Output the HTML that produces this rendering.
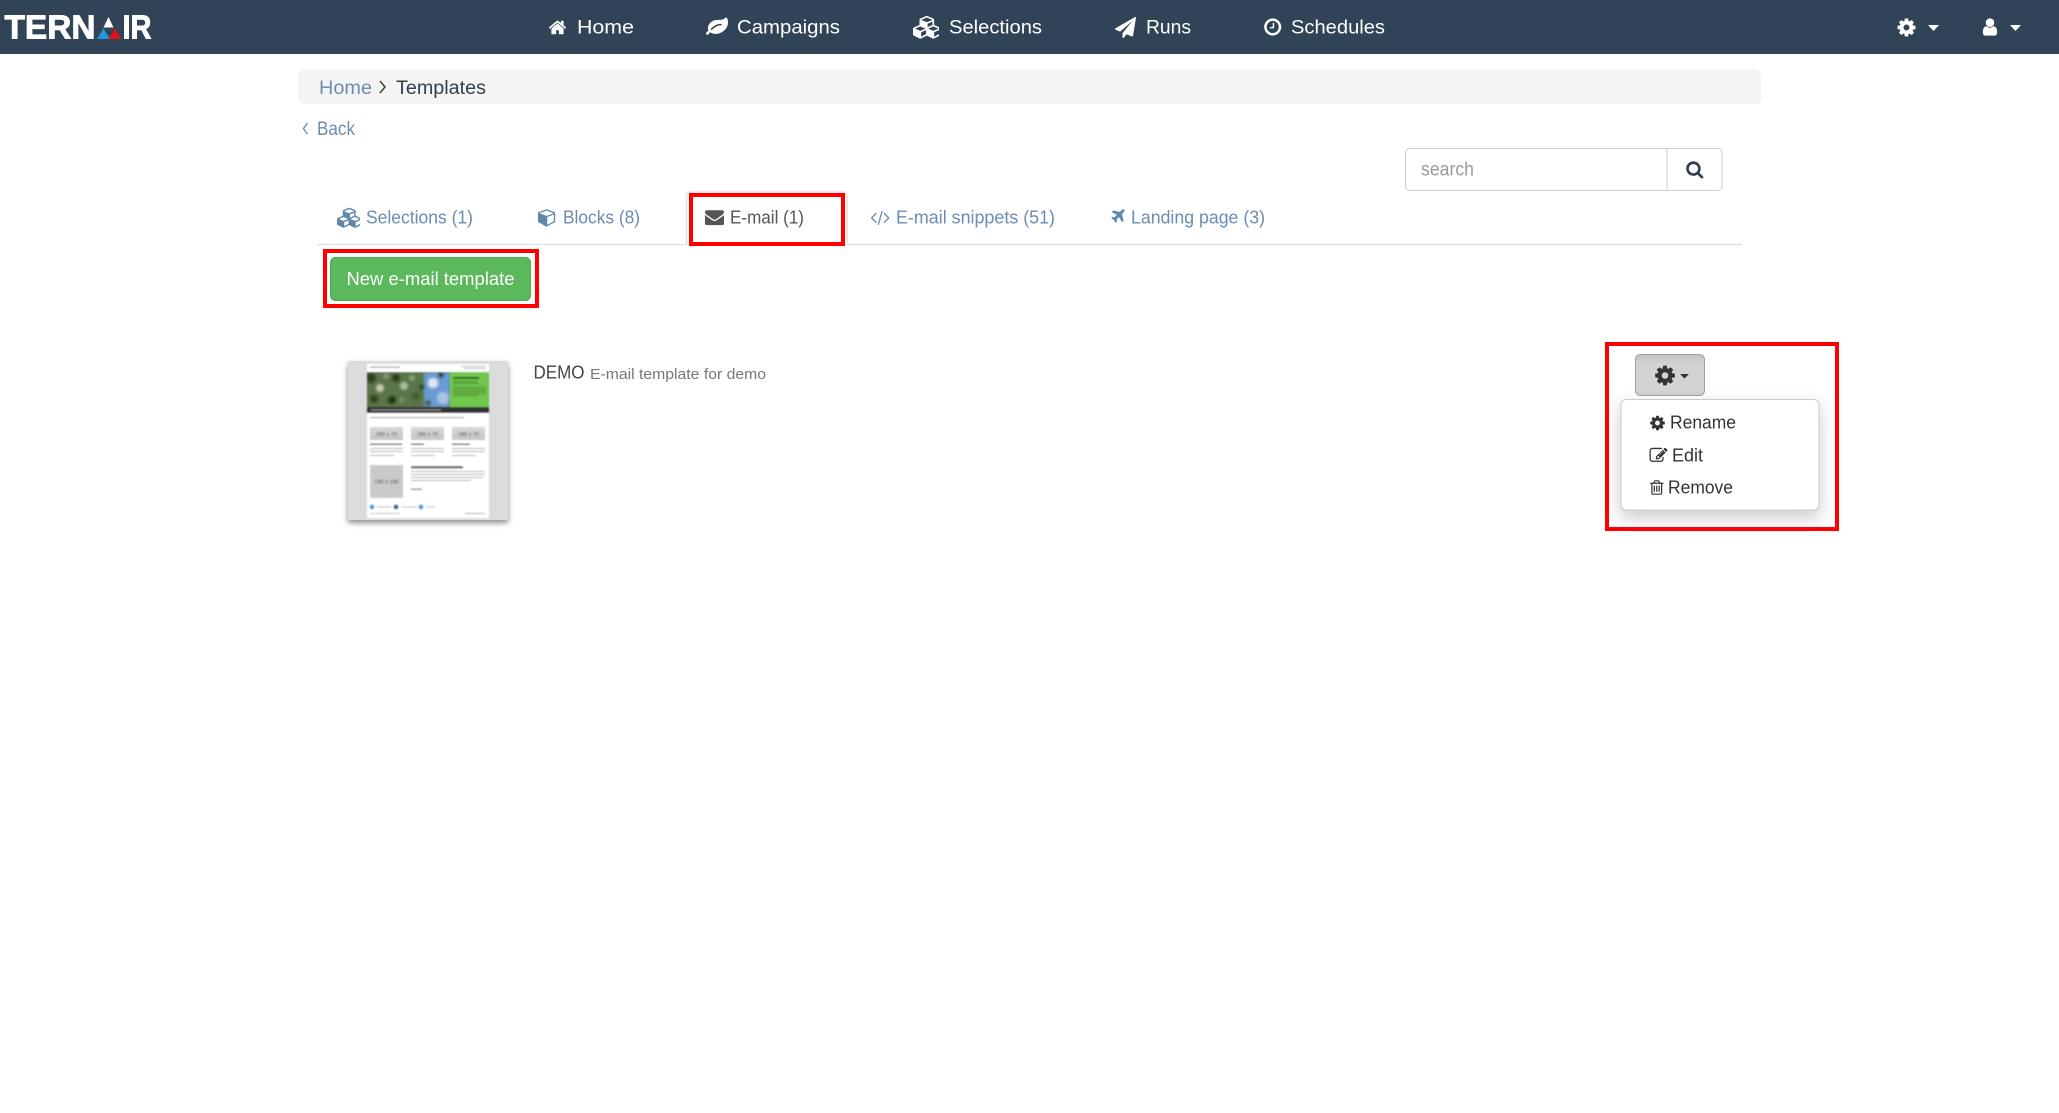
<!DOCTYPE html>
<html lang="en"><head><meta charset="utf-8"><title>Templates</title>
<style>
html,body{margin:0;padding:0;background:#fff;width:2059px;height:1113px;overflow:hidden}
svg{display:block}
text{font-family:"Liberation Sans",Arial,sans-serif}
.nav{font-size:19.5px;fill:#fff}
.bc{font-size:19px}
.tab{font-size:18.5px;fill:#6c8cb0}
.menu{font-size:18.5px;fill:#333}
.logo{font-size:33px;font-weight:700;fill:#fff;stroke:#fff;stroke-width:.9px}
</style></head><body>
<svg width="2059" height="1113" viewBox="0 0 2059 1113" xmlns="http://www.w3.org/2000/svg">
<defs>
<symbol id="cog" viewBox="0 0 1792 1792"><path d="M1152 896q0-106-75-181t-181-75-181 75-75 181 75 181 181 75 181-75 75-181zm512-109v222q0 12-8 23t-20 13l-185 28q-19 54-39 91 35 50 107 138 10 12 10 25t-9 23q-27 37-99 108t-94 71q-12 0-26-9l-138-108q-44 23-91 38-16 136-29 186-7 28-36 28h-222q-14 0-24.500-8.500t-11.500-21.500l-28-184q-49-16-90-37l-141 107q-10 9-25 9-14 0-25-11-126-114-165-168-7-10-7-23 0-12 8-23 15-21 51-66.500t54-70.500q-27-50-41-99l-183-27q-13-2-21-12.500t-8-23.500v-222q0-12 8-23t19-13l186-28q14-46 39-92-40-57-107-138-10-12-10-24 0-10 9-23 26-36 98.500-107.500t94.500-71.500q13 0 26 10l138 107q44-23 91-38 16-136 29-186 7-28 36-28h222q14 0 24.500 8.500t11.500 21.500l28 184q49 16 90 37l142-107q9-9 24-9 13 0 25 10 129 119 165 170 7 8 7 22 0 12-8 23-15 21-51 66.500t-54 70.500q26 50 41 98l183 28q13 2 21 12.500t8 23.500z"/></symbol>
<symbol id="home" viewBox="0 0 1792 1792"><path d="M1472 992v480q0 26-19 45t-45 19h-384v-384h-256v384h-384q-26 0-45-19t-19-45v-480q0-1 .5-3t.5-3l575-474 575 474q1 2 1 6zm223-69l-62 74q-8 9-21 11h-3q-13 0-21-7l-692-577-692 577q-12 8-24 7-13-2-21-11l-62-74q-8-10-7-23.500t11-21.500l719-599q32-26 76-26t76 26l244 204v-195q0-14 9-23t23-9h192q14 0 23 9t9 23v408l219 182q10 8 11 21.500t-7 23.500z"/></symbol>
<symbol id="env" viewBox="0 0 1792 1792"><path d="M1792 710v794q0 66-47 113t-113 47h-1472q-66 0-113-47t-47-113v-794q44 49 101 87 362 246 497 345 57 42 92.500 65.500t94.500 48 110 24.500h2q51 0 110-24.500t94.500-48 92.500-65.500q170-123 498-345 57-39 100-87zm0-294q0 79-49 151t-122 123q-376 261-468 325-10 7-42.500 30.500t-54 38-52 32.500-57.500 27-50 9h-2q-23 0-50-9t-57.500-27-52-32.500-54-38-42.500-30.500q-91-64-262-182.500t-205-142.500q-62-42-117-115.500t-55-136.500q0-78 41.500-130t118.500-52h1472q65 0 112.500 47t47.500 113z"/></symbol>
<symbol id="search" viewBox="0 0 1792 1792"><path d="M1216 832q0-185-131.500-316.500t-316.500-131.500-316.500 131.500-131.500 316.500 131.500 316.500 316.500 131.500 316.500-131.500 131.500-316.500zm512 832q0 52-38 90t-90 38q-54 0-90-38l-343-342q-179 124-399 124-143 0-273.500-55.500t-225-150-150-225-55.500-273.500 55.500-273.500 150-225 225-150 273.500-55.500 273.500 55.500 225 150 150 225 55.500 273.500q0 220-124 399l343 343q37 37 37 90z"/></symbol>
<symbol id="user" viewBox="0 0 1792 1792"><path d="M1536 1399q0 109-62.500 187t-150.500 78h-854q-88 0-150.500-78t-62.500-187q0-85 8.500-160.500t31.500-152 58.500-131 94-89 134.500-34.500q131 128 313 128t313-128q76 0 134.500 34.500t94 89 58.500 131 31.500 152 8.500 160.500zm-256-887q0 159-112.500 271.500t-271.500 112.500-271.500-112.500-112.500-271.500 112.500-271.500 271.500-112.500 271.500 112.500 112.500 271.500z"/></symbol>
<symbol id="send" viewBox="0 0 1792 1792"><path d="M1764 11q33 24 27 64l-256 1536q-5 29-32 45-14 8-31 8-11 0-24-5l-453-185-242 295q-18 23-49 23-13 0-22-4-19-7-30.500-23.500t-11.500-36.500v-349l864-1059-1069 925-395-162q-37-14-40-55-2-40 32-59l1664-960q15-9 32-9 20 0 36 11z"/></symbol>
<symbol id="plane" viewBox="0 0 1408 1792"><path d="M1376 160q44 52 12 148t-108 172l-161 161 160 696q5 19-12 33l-128 96q-7 6-19 6-4 0-7-1-15-3-21-16l-279-508-259 259 53 194q5 17-8 31l-96 96q-9 9-23 9h-2q-15-2-24-13l-189-252-252-189q-11-7-13-23-1-13 9-25l96-97q9-9 23-9 6 0 8 1l194 53 259-259-508-279q-14-8-17-24-2-16 9-27l128-128q14-13 30-8l665 159 160-160q76-76 172-108t148 12z"/></symbol>
<symbol id="clock" viewBox="0 0 1792 1792"><path transform="translate(64 0)" d="M1024 544v448q0 14-9 23t-23 9h-320q-14 0-23-9t-9-23v-64q0-14 9-23t23-9h224v-352q0-14 9-23t23-9h64q14 0 23 9t9 23zm416 352q0-148-73-273t-198-198-273-73-273 73-198 198-73 273 73 273 198 198 273 73 273-73 198-198 73-273zm224 0q0 209-103 385.500t-279.500 279.500-385.500 103-385.500-103-279.500-279.500-103-385.500 103-385.500 279.500-279.500 385.500-103 385.500 103 279.500 279.500 103 385.500z"/></symbol>
<symbol id="leaf" viewBox="0 0 1792 1792"><path d="M1280 704q0-26-19-45t-45-19q-172 0-318 49.500t-259.500 134-235.500 219.500q-19 21-19 45 0 26 19 45t45 19q24 0 45-19 27-24 74-71t67-66q137-124 268.500-176t313.500-52q26 0 45-19t19-45zm512-198q0 95-20 193-46 224-184.500 383t-357.500 268q-214 108-438 108-148 0-286-47-15-5-88-42t-96-37q-16 0-39.500 32t-45 70-52.500 70-60 32q-30 0-51-11t-31-24-27-42q-2-4-6-11t-5.500-10-3-9.500-1.500-13.500q0-35 31-73.500t68-65.500 68-56 31-48q0-4-14-38t-16-44q-9-51-9-104 0-115 43.500-220t119-184.500 170.500-139 204-95.500q55-18 145-25.500t179.500-9 178.500-6 163.500-24 113.500-56.500l29.500-29.500 29.500-28 27-20 36.500-16 43.500-4.500q39 0 70.500 46t47.500 112 24 124 8 96z"/></symbol>
<symbol id="cubes" viewBox="0 0 2048 1792"><path d="M640 1632l384-192v-314l-384 164v342zm-64-454l404-173-404-173-404 173zm1088 454l384-192v-314l-384 164v342zm-64-454l404-173-404-173-404 173zm-448-293l384-165v-266l-384 164v267zm-64-379l441-189-441-189-441 189zm1088 518v416q0 36-19 67t-52 47l-448 224q-25 14-57 14t-57-14l-448-224q-4-2-7-4-2 2-7 4l-448 224q-25 14-57 14t-57-14l-448-224q-33-16-52-47t-19-67v-416q0-38 21.500-70t56.500-48l434-186v-400q0-38 21.500-70t56.500-48l448-192q23-10 50-10t50 10l448 192q35 16 56.500 48t21.500 70v400l434 186q36 16 57 48t21 70z"/></symbol>
<symbol id="cube" viewBox="0 0 1792 1792"><path d="M896 1629l640-349v-636l-640 233v752zm-64-865l698-254-698-254-698 254zm832-252v768q0 35-18 65t-49 47l-704 384q-28 16-61 16t-61-16l-704-384q-31-17-49-47t-18-65v-768q0-40 23-73t61-47l704-256q22-8 44-8t44 8l704 256q38 14 61 47t23 73z"/></symbol>
<symbol id="code" viewBox="0 0 1801 1792"><path d="M553 1399l-50 50q-10 10-23 10t-23-10l-466-466q-10-10-10-23t10-23l466-466q10-10 23-10t23 10l50 50q10 10 10 23t-10 23l-393 393 393 393q10 10 10 23t-10 23zm591-1067l-373 1291q-4 13-15.500 19.500t-23.500 2.500l-62-17q-13-4-19.500-15.500t-2.500-24.500l373-1291q4-13 15.500-19.500t23.500-2.500l62 17q13 4 19.500 15.500t2.500 24.500zm657 651l-466 466q-10 10-23 10t-23-10l-50-50q-10-10-10-23t10-23l393-393-393-393q-10-10-10-23t10-23l50-50q10-10 23-10t23 10l466 466q10 10 10 23t-10 23z"/></symbol>
<symbol id="edit" viewBox="0 0 1792 1792"><path d="M888 1184l116-116-152-152-116 116v56h96v96h56zm440-720q-16-16-33 1l-350 350q-17 17-1 33t33-1l350-350q17-17 1-33zm80 594v190q0 119-84.500 203.500t-203.500 84.500h-832q-119 0-203.500-84.500t-84.500-203.500v-832q0-119 84.500-203.500t203.500-84.500h832q63 0 117 25 15 7 18 23 3 17-9 29l-49 49q-14 14-32 8-23-6-45-6h-832q-66 0-113 47t-47 113v832q0 66 47 113t113 47h832q66 0 113-47t47-113v-126q0-13 9-22l64-64q15-15 35-7t20 29zm-96-738l288 288-672 672h-288v-288zm444 132l-92 92-288-288 92-92q28-28 68-28t68 28l152 152q28 28 28 68t-28 68z"/></symbol>
<symbol id="trash" viewBox="0 0 1408 1792"><path d="M512 736v576q0 14-9 23t-23 9h-64q-14 0-23-9t-9-23v-576q0-14 9-23t23-9h64q14 0 23 9t9 23zm256 0v576q0 14-9 23t-23 9h-64q-14 0-23-9t-9-23v-576q0-14 9-23t23-9h64q14 0 23 9t9 23zm256 0v576q0 14-9 23t-23 9h-64q-14 0-23-9t-9-23v-576q0-14 9-23t23-9h64q14 0 23 9t9 23zm128 724v-948h-896v948q0 22 7 40.500t14.500 27 10.500 8.500h832q3 0 10.500-8.500t14.500-27 7-40.500zm-672-1076h448l-48-117q-7-9-17-11h-317q-10 2-17 11zm928 32v64q0 14-9 23t-23 9h-96v948q0 83-47 143.500t-113 60.500h-832q-66 0-113-58.500t-47-141.500v-952h-96q-14 0-23-9t-9-23v-64q0-14 9-23t23-9h309l70-167q15-37 54-63t79-26h320q40 0 79 26t54 63l70 167h309q14 0 23 9t9 23z"/></symbol>
<filter id="b5" x="-5%" y="-5%" width="110%" height="110%"><feGaussianBlur stdDeviation="0.75"/></filter>
<filter id="b2" x="-20%" y="-20%" width="140%" height="140%"><feGaussianBlur stdDeviation="1.1"/></filter>
<linearGradient id="btng" x1="0" y1="0" x2="0" y2="1"><stop offset="0" stop-color="#c4c4c4"/><stop offset=".25" stop-color="#d2d2d2"/><stop offset="1" stop-color="#d4d4d4"/></linearGradient>
<linearGradient id="boxg" x1="0" y1="0" x2="0" y2="1"><stop offset="0" stop-color="#d8d8d8"/><stop offset="1" stop-color="#c4c4c4"/></linearGradient>
<clipPath id="hero"><rect x="367" y="372" width="83" height="35"/></clipPath>
</defs>

<!-- Navbar -->
<rect x="0" y="0" width="2059" height="54" fill="#314356"/>
<text class="logo" x="4.500" y="38.300" textLength="91" lengthAdjust="spacingAndGlyphs">TERN</text>
<polygon points="108.500,17 113.500,27.500 103.500,27.500" fill="#fff"/>
<polygon points="103.500,28.500 110,39 97,39" fill="#1f9ad6"/>
<polygon points="114.500,28.500 121.500,39 108.500,39" fill="#e3101f"/>
<text class="logo" x="122.500" y="38.300" textLength="29" lengthAdjust="spacingAndGlyphs">IR</text>

<use href="#home" x="548" y="18" width="19" height="19" fill="#fff"/>
<text class="nav" x="577" y="33.500" textLength="57" lengthAdjust="spacingAndGlyphs">Home</text>
<use href="#leaf" x="706" y="16" width="22" height="22" fill="#fff"/>
<text class="nav" x="737" y="33.500" textLength="103" lengthAdjust="spacingAndGlyphs">Campaigns</text>
<use href="#cubes" x="913" y="15.500" width="26" height="23.500" fill="#fff"/>
<text class="nav" x="949" y="33.500" textLength="93" lengthAdjust="spacingAndGlyphs">Selections</text>
<use href="#send" x="1115" y="17" width="21" height="21" fill="#fff"/>
<text class="nav" x="1146" y="33.500" textLength="45" lengthAdjust="spacingAndGlyphs">Runs</text>
<use href="#clock" x="1262" y="17" width="20" height="20" fill="#fff"/>
<text class="nav" x="1291" y="33.500" textLength="94" lengthAdjust="spacingAndGlyphs">Schedules</text>

<use href="#cog" x="1896" y="17" width="21" height="21" fill="#fff"/>
<polygon points="1928,25 1939,25 1933.500,31" fill="#fff"/>
<use href="#user" x="1980" y="17" width="20" height="20" fill="#fff"/>
<polygon points="2010,25 2021,25 2015.500,31" fill="#fff"/>

<!-- Breadcrumb -->
<rect x="298" y="69" width="1463" height="35" rx="6" fill="#f4f4f4"/>
<text class="bc" x="319" y="94" fill="#6c8cb0" textLength="53" lengthAdjust="spacingAndGlyphs">Home</text>
<polyline points="380,81 385,87 380,93" fill="none" stroke="#333" stroke-width="1.400"/>
<text class="bc" x="396" y="94" fill="#33404e" textLength="90" lengthAdjust="spacingAndGlyphs">Templates</text>
<polyline points="307.500,123 303.500,128.500 307.500,134" fill="none" stroke="#6c8cb0" stroke-width="1.400"/>
<text class="bc" x="317" y="135" fill="#6c8cb0" textLength="38" lengthAdjust="spacingAndGlyphs">Back</text>

<!-- Search -->
<path d="M1409.500 148.500H1667V190.500H1409.500a4 4 0 0 1-4-4V152.500a4 4 0 0 1 4-4z" fill="#fff" stroke="#ccc"/>
<path d="M1667 148.500H1718a4 4 0 0 1 4 4V186.500a4 4 0 0 1-4 4H1667z" fill="#fff" stroke="#ccc"/>
<text x="1421" y="175.500" font-size="19" fill="#999" textLength="53" lengthAdjust="spacingAndGlyphs">search</text>
<use href="#search" x="1685.500" y="160" width="18.500" height="18.500" fill="#2c3e50"/>

<!-- Tabs -->
<line x1="317" y1="244.500" x2="1742" y2="244.500" stroke="#ddd" stroke-width="1.300"/>
<path d="M686.500 245V196a4 4 0 0 1 4-4H843a4 4 0 0 1 4 4V245" fill="#fff" stroke="#ddd" stroke-width="1.300"/>
<line x1="687.500" y1="244.500" x2="846" y2="244.500" stroke="#fff" stroke-width="1.500"/>
<use href="#cubes" x="337" y="207.500" width="23" height="20.500" fill="#5f87a9"/>
<text class="tab" x="366" y="223.500" textLength="107" lengthAdjust="spacingAndGlyphs">Selections (1)</text>
<use href="#cube" x="538" y="208" width="18.500" height="18.500" fill="#5f87a9"/>
<text class="tab" x="563" y="223.500" textLength="77" lengthAdjust="spacingAndGlyphs">Blocks (8)</text>
<use href="#env" x="705" y="207.500" width="19" height="19" fill="#555"/>
<text class="tab" style="fill:#555" x="730" y="223.500" textLength="74" lengthAdjust="spacingAndGlyphs">E-mail (1)</text>
<use href="#code" x="871" y="208" width="18.500" height="18.500" fill="#6c8cb0"/>
<text class="tab" x="896" y="223.500" textLength="159" lengthAdjust="spacingAndGlyphs">E-mail snippets (51)</text>
<use href="#plane" x="1110" y="208" width="16" height="17" fill="#5f87a9"/>
<text class="tab" x="1131" y="223.500" textLength="134" lengthAdjust="spacingAndGlyphs">Landing page (3)</text>
<rect x="691" y="195" width="152" height="49" fill="none" stroke="#f00" stroke-width="4"/>

<!-- New template button -->
<rect x="330.500" y="257.500" width="200" height="43" rx="5" fill="#5cb85c" stroke="#4cae4c"/>
<text x="346.500" y="285" font-size="18.500" fill="#fff" textLength="168" lengthAdjust="spacingAndGlyphs">New e-mail template</text>
<rect x="325" y="251" width="212" height="55" fill="none" stroke="#f00" stroke-width="4"/>

<!-- Thumbnail -->
<rect x="348" y="361" width="160" height="159" fill="#dcdcdc" style="filter:drop-shadow(0 3px 3px rgba(0,0,0,.45))"/>
<g filter="url(#b5)">
<rect x="367" y="364" width="122" height="154" fill="#fff"/>
<rect x="370" y="366.500" width="30" height="1.200" fill="#999"/>
<rect x="461" y="366" width="25" height="1" fill="#bbb"/><rect x="464" y="368" width="22" height="1" fill="#bbb"/>
<rect x="367" y="372" width="83" height="35" fill="#5a7448"/>
<g clip-path="url(#hero)"><g filter="url(#b2)">
<rect x="424" y="372" width="26" height="35" fill="#6b9bd4"/>
<circle cx="433" cy="383" r="5" fill="#dfe8f2"/>
<circle cx="443" cy="398" r="6" fill="#a9c2e2"/>
<circle cx="371" cy="378" r="5" fill="#2f4020"/>
<circle cx="380" cy="388" r="4" fill="#c9cbb0"/>
<circle cx="374" cy="399" r="4" fill="#38421e"/>
<circle cx="386" cy="376" r="3" fill="#8d9a70"/>
<circle cx="396" cy="378" r="4" fill="#2a3a1c"/>
<circle cx="404" cy="386" r="4" fill="#a6c2a2"/>
<circle cx="412" cy="378" r="3" fill="#82a86e"/>
<circle cx="416" cy="396" r="4" fill="#3f6428"/>
<circle cx="392" cy="400" r="4" fill="#233518"/>
<circle cx="402" cy="400" r="3" fill="#6f9060"/>
<circle cx="422" cy="387" r="3" fill="#2f5026"/>
<circle cx="441" cy="375" r="3" fill="#2b3f24"/>
<circle cx="428" cy="403" r="3" fill="#3f5a48"/>
</g></g>
<rect x="450" y="372" width="39" height="35" fill="#70c74b"/>
<rect x="453" y="377" width="26" height="1.800" fill="#2c4a1c"/>
<rect x="453" y="381" width="24" height="1" fill="#46802c"/><rect x="453" y="383" width="26" height="1" fill="#46802c"/>
<rect x="453" y="387" width="33" height="1" fill="#4c8a30"/><rect x="453" y="389" width="33" height="1" fill="#4c8a30"/><rect x="453" y="391" width="33" height="1" fill="#4c8a30"/><rect x="453" y="393" width="33" height="1" fill="#4c8a30"/><rect x="453" y="395" width="25" height="1" fill="#4c8a30"/>
<rect x="367" y="407" width="122" height="6" fill="#333"/>
<rect x="371" y="409.500" width="70" height="1" fill="#999"/>
<rect x="370" y="417" width="94" height="1.200" fill="#aaa"/>
<rect x="370" y="427" width="33" height="13" fill="url(#boxg)"/>
<rect x="411" y="427" width="33" height="13" fill="url(#boxg)"/>
<rect x="452" y="427" width="33" height="13" fill="url(#boxg)"/>
<text x="386.500" y="436" font-size="5.500" text-anchor="middle" fill="#444">180 x 75</text>
<text x="427.500" y="436" font-size="5.500" text-anchor="middle" fill="#444">180 x 75</text>
<text x="468.500" y="436" font-size="5.500" text-anchor="middle" fill="#444">180 x 75</text>
<rect x="370" y="443.500" width="32" height="1.400" fill="#555"/><rect x="411" y="443.500" width="13" height="1.400" fill="#555"/><rect x="452" y="443.500" width="18" height="1.400" fill="#555"/>
<rect x="370" y="448" width="33" height="1" fill="#aaa"/><rect x="370" y="451" width="33" height="1" fill="#aaa"/><rect x="370" y="455" width="24" height="1" fill="#aaa"/>
<rect x="411" y="448" width="33" height="1" fill="#aaa"/><rect x="411" y="451" width="33" height="1" fill="#aaa"/><rect x="411" y="455" width="24" height="1" fill="#aaa"/>
<rect x="452" y="448" width="33" height="1" fill="#aaa"/><rect x="452" y="451" width="33" height="1" fill="#aaa"/><rect x="452" y="455" width="24" height="1" fill="#aaa"/>
<rect x="370" y="465" width="33" height="33" fill="#cacaca"/>
<text x="386.500" y="483.500" font-size="5.500" text-anchor="middle" fill="#444">180 x 180</text>
<rect x="411" y="466" width="52" height="2.500" fill="#666"/>
<rect x="411" y="471" width="74" height="1" fill="#aaa"/><rect x="411" y="474" width="74" height="1" fill="#aaa"/><rect x="411" y="477" width="72" height="1" fill="#aaa"/><rect x="411" y="480" width="60" height="1" fill="#aaa"/>
<rect x="411" y="488.500" width="11" height="1.500" fill="#6da34e"/>
<circle cx="372" cy="507" r="2.500" fill="#4f9fd8"/><circle cx="396" cy="507" r="2.500" fill="#3e68a8"/><circle cx="421" cy="507" r="2.500" fill="#4f9fd8"/>
<rect x="377" y="506.500" width="14" height="1" fill="#bbb"/><rect x="401" y="506.500" width="16" height="1" fill="#bbb"/><rect x="426" y="506.500" width="9" height="1" fill="#bbb"/>
<rect x="370" y="513" width="30" height="1" fill="#bbb"/><rect x="465" y="513" width="20" height="1" fill="#aaa"/>
</g>

<!-- Template description -->
<text x="533.500" y="378.500" font-size="18.500" fill="#444" textLength="51" lengthAdjust="spacingAndGlyphs">DEMO</text>
<text x="590" y="379" font-size="15" fill="#777" textLength="176" lengthAdjust="spacingAndGlyphs">E-mail template for demo</text>

<!-- Action dropdown -->
<rect x="1635.500" y="354.500" width="69" height="41" rx="5" fill="url(#btng)" stroke="#a0a0a0"/>
<use href="#cog" x="1653.500" y="364" width="23" height="23" fill="#333"/>
<polygon points="1680,374 1689,374 1684.500,378.500" fill="#333"/>
<rect x="1621" y="399.500" width="198" height="110.500" rx="5" fill="#fff" stroke="#ccc" style="filter:drop-shadow(0 8px 9px rgba(0,0,0,.2))"/>
<use href="#cog" x="1649" y="414.500" width="17" height="17" fill="#333"/>
<text class="menu" x="1670" y="428.700" textLength="66" lengthAdjust="spacingAndGlyphs">Rename</text>
<use href="#edit" x="1649.500" y="446.500" width="18" height="18" fill="#333"/>
<text class="menu" x="1672" y="461.500" textLength="31" lengthAdjust="spacingAndGlyphs">Edit</text>
<use href="#trash" x="1650" y="479" width="13.500" height="17" fill="#333"/>
<text class="menu" x="1668" y="493.700" textLength="65" lengthAdjust="spacingAndGlyphs">Remove</text>
<rect x="1607" y="344" width="230" height="185" fill="none" stroke="#f00" stroke-width="4"/>
</svg>
</body></html>
